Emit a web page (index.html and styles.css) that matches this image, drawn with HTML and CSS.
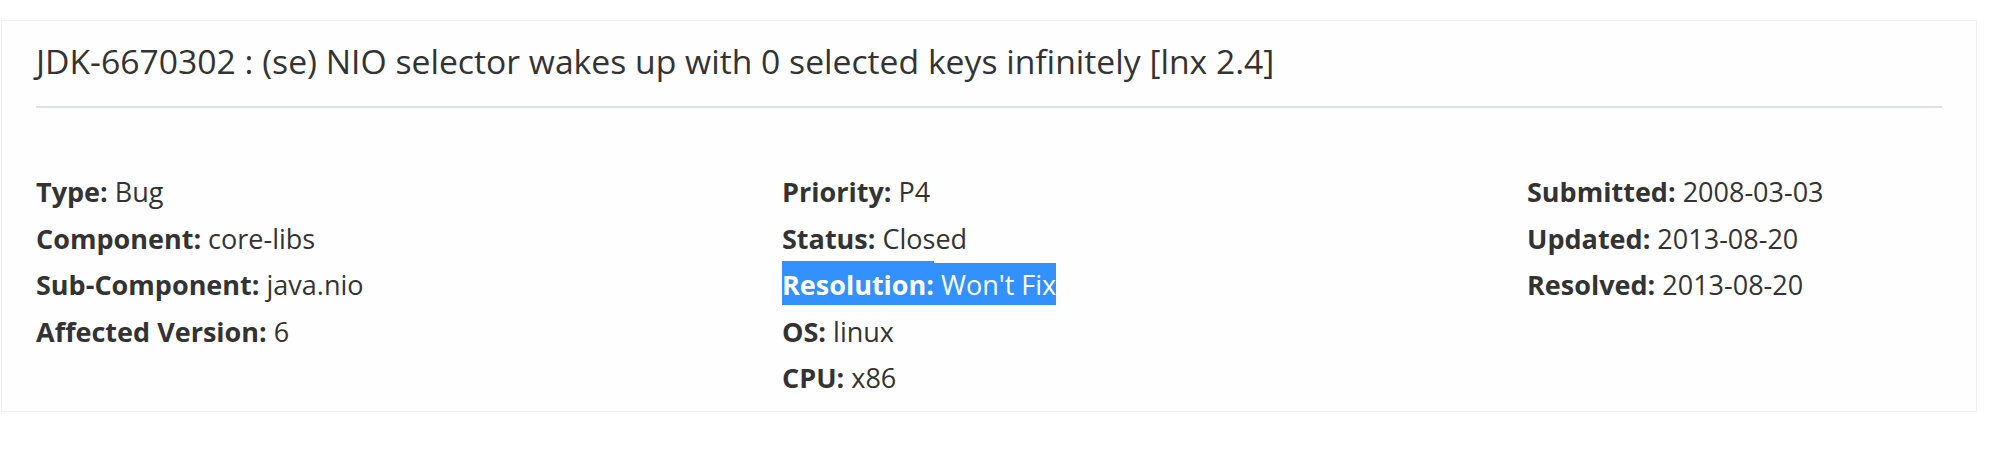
FILE: index.html
```html
<!DOCTYPE html>
<html lang="en">
<head>
<meta charset="utf-8">
<title>JDK-6670302</title>
<link rel="stylesheet" href="styles.css">
</head>
<body>
<div class="card">
  <h3 class="title">JDK-6670302 : (se) NIO selector wakes up with 0 selected keys infinitely [lnx 2.4]</h3>
  <div class="rule"></div>
  <div class="fields">
    <div class="col">
      <div class="row"><span class="label">Type:</span> Bug</div>
      <div class="row"><span class="label">Component:</span> core-libs</div>
      <div class="row"><span class="label">Sub-Component:</span> java.nio</div>
      <div class="row"><span class="label">Affected Version:</span> 6</div>
    </div>
    <div class="col">
      <div class="row"><span class="label">Priority:</span> P4</div>
      <div class="row"><span class="label">Status:</span> Closed</div>
      <div class="row"><span class="selected"><span class="label sel-label">Resolution:</span> Won't Fix</span></div>
      <div class="row"><span class="label">OS:</span> linux</div>
      <div class="row"><span class="label">CPU:</span> x86</div>
    </div>
    <div class="col">
      <div class="row"><span class="label">Submitted:</span> 2008-03-03</div>
      <div class="row"><span class="label">Updated:</span> 2013-08-20</div>
      <div class="row"><span class="label">Resolved:</span> 2013-08-20</div>
    </div>
  </div>
</div>
</body>
</html>
```

FILE: styles.css
```css
html, body {
  margin: 0;
  background: #ffffff;
}
body {
  padding: 20px 0 0 1px;
  font-family: "Open Sans", "Noto Sans", sans-serif;
  color: #333333;
}
.card {
  width: 1976px;
  box-sizing: border-box;
  border: 1px solid #f1f1f1;
  background: #fefefe;
  padding: 20px 34px 9px 34px;
}
.title {
  margin: 0;
  font-size: 33.7px;
  font-weight: 400;
  line-height: 40px;
  color: #333333;
  white-space: nowrap;
}
.rule {
  margin-top: 25px;
  height: 2px;
  background: #dde3ea;
}
.fields {
  margin-top: 61px;
  display: grid;
  grid-template-columns: 746px 745px 1fr;
}
.row {
  font-size: 27px;
  line-height: 46.5px;
  white-space: nowrap;
}
.label {
  font-weight: 700;
}
.selected {
  background: #3390ff;
  color: #ffffff;
  padding: 3px 0 2px 0;
}
.sel-label {
  padding-top: 5px;
  background: #3390ff;
}
```
